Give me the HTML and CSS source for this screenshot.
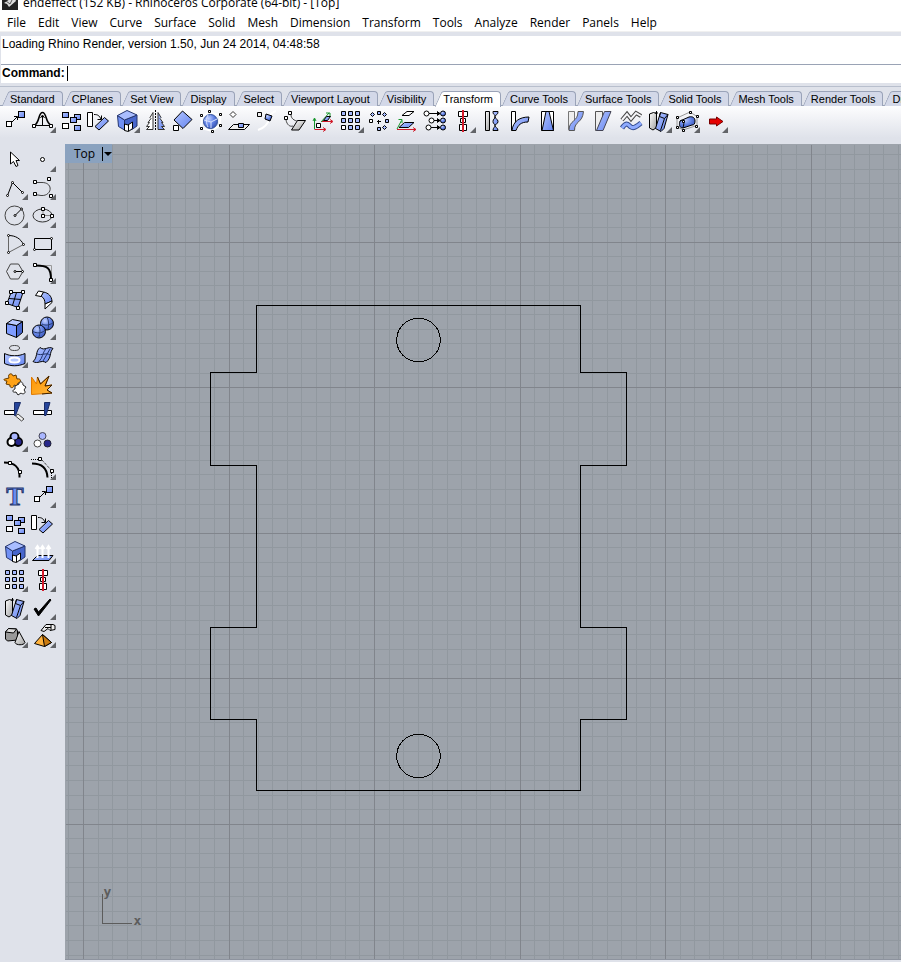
FILE: index.html
```
<!DOCTYPE html>
<html lang="en">
<head>
    <meta charset="UTF-8">
    <meta name="viewport" content="width=device-width, initial-scale=1.0">
    <title>endeffect (152 KB) - Rhinoceros Corporate (64-bit) - [Top]</title>
    <link rel="stylesheet" href="styles.css">
</head>
<body>
    <!-- icon set, every icon on a 28 x 28 grid -->
    <svg class="icon-defs" aria-hidden="true">
        <defs>
            <linearGradient id="blue" x1="0" y1="0" x2="1" y2="1"><stop offset="0" stop-color="#b4c6ff"/><stop offset="1" stop-color="#6484f0"/></linearGradient>
            <radialGradient id="ball" cx=".35" cy=".3" r=".8"><stop offset="0" stop-color="#c4d2ff"/><stop offset=".5" stop-color="#6484e6"/><stop offset="1" stop-color="#304cae"/></radialGradient>
            <linearGradient id="gray" x1="0" y1="0" x2="1" y2="1"><stop offset="0" stop-color="#ffffff"/><stop offset="1" stop-color="#a0a0a0"/></linearGradient>
            <linearGradient id="gold" x1="0" y1="0" x2="1" y2="1"><stop offset="0" stop-color="#ff9500"/><stop offset="1" stop-color="#ffb63c"/></linearGradient>
        </defs>
        <symbol id="fly" viewBox="0 0 28 28"><path d="M27 21v6h-6z" fill="#626468" stroke="none"/></symbol>
        <symbol id="move" viewBox="0 0 28 28"><path d="M11 16l5-5M13 10.5h3.5v3.500" fill="none"/><rect x="5.5" y="15.5" width="5" height="5" fill="#fff"/><rect x="17.5" y="5.5" width="6" height="6" fill="url(#blue)"/></symbol>
        <symbol id="bell" viewBox="0 0 28 28"><path d="M5 19.5C11 17 9 6.5 13.5 6.5S16 17 22.5 19.5" fill="none" stroke-width="1.6"/><path d="M5 19.5h17M13.5 19v-9M11.5 12l2-3 2 3" fill="none"/><path d="M3.5 18.5h3v3h-3zM20.5 18.5h3v3h-3z" fill="#fff"/></symbol>
        <symbol id="copy" viewBox="0 0 28 28"><rect x="5.5" y="6.5" width="6" height="5" fill="url(#blue)"/><rect x="17.5" y="8.5" width="6" height="5" fill="url(#blue)"/><rect x="13.5" y="11.5" width="6" height="5" fill="url(#blue)"/><rect x="17.5" y="19.5" width="6" height="5" fill="url(#blue)"/><rect x="5.5" y="17.5" width="6" height="5" fill="#fff"/></symbol>
        <symbol id="rotate" viewBox="0 0 28 28"><path d="M2.5 6.5h5v14h-5z" fill="#fff"/><path d="M9 8.5c4 0 5 1 7 4.5M16.5 9.5v4h-4" fill="none"/><path d="M19.5 11.5l4 3.5-9.5 9-4-3.5z" fill="url(#blue)"/></symbol>
        <symbol id="cage" viewBox="0 0 28 28"><g stroke="#24356e"><path d="M4.500 9.500l7 4.500v10l-6-3.500z" fill="#7090f4"/><path d="M11.500 14L24 9v11l-5 3.500-7.500.5z" fill="#4766cc"/><path d="M4.500 9.500L14 4.500l10 4.500-12.500 5z" fill="#a9bdff"/></g><path d="M11.500 24.500v-6.500l3.500 1 4.500-3v6.500l-4 3z" fill="#fff"/><path d="M15.500 19v6"/></symbol>
        <symbol id="mirror" viewBox="0 0 28 28"><path d="M12 6.5v17H5.5l3-3h-3l3-4H7l3-4-1-1 3-5z" fill="#fff" stroke="#333"/><path d="M17 6.5v17h6.5l-3-3h3l-3-4H22l-3-4 1-1-3-5z" fill="url(#blue)" stroke="#333"/><path d="M14.5 4v21" stroke-dasharray="2 1"/></symbol>
        <symbol id="scale" viewBox="0 0 28 28"><path d="M13.5 5l9.5 8.5-9 9L5 14z" fill="url(#blue)"/><path d="M4.5 19.5h5v5h-5z" fill="#fff"/></symbol>
        <symbol id="globe" viewBox="0 0 28 28"><path d="M5 10l7-4 11 3v10l-8 6-11-3z" fill="none" stroke="#fff" stroke-width="2"/><circle cx="13.5" cy="15.5" r="7" fill="url(#ball)" stroke="#30509c"/><path d="M7 14l7 2 6-3M14 16v6M11 9c-2 4-2 8 0 12" fill="none" stroke="#d8e2ff"/><path d="M3.5 8.5h2v2h-2zM11.5 4.5h2v2h-2zM22.5 7.5h2v2h-2zM3.5 21.5h2v2h-2zM22.5 18.5h2v2h-2zM14.5 24.5h2v2h-2z" fill="#fff"/></symbol>
        <symbol id="plane" viewBox="0 0 28 28"><path d="M8 5.5l3 3-3 3-3-3z" fill="#fff" stroke="#333"/><path d="M3.5 23.5l5-5h16l-5 5z" fill="#eee"/><path d="M13.5 17.5h5v4h-5z" fill="url(#blue)"/></symbol>
        <symbol id="along" viewBox="0 0 28 28"><path d="M23 5c-4 1-6 3-7 8s-5 9-11 11" fill="none" stroke="#fff" stroke-width="2"/><path d="M4.5 6.5h4v4h-4z" fill="#eee"/><path d="M13 8l6 2-2 5-5-2z" fill="url(#ball)"/></symbol>
        <symbol id="orient" viewBox="0 0 28 28"><path d="M5 14c1 5 4 7 7 6M10 9c0 3 3 6 7 6" fill="none" stroke="#444"/><path d="M10.5 24l6-9.5h8l-6.5 9.5z" fill="url(#gray)"/><path d="M7.5 5.5h3v3h-3zM3.5 10.5h3v3h-3z" fill="#fff"/></symbol>
        <symbol id="remap" viewBox="0 0 28 28"><path d="M5.5 23V13M4 15l1.5-3L7 15M12 16l8-9M17 7h4v4" fill="none" stroke="#16962a"/><path d="M5.5 23.5H16M14 21.5l3 2-3 2M13 15.5h10M21 13.5l3 2-3 2" fill="none" stroke="#d01828"/><path d="M7.5 17.5h4v4h-4z" fill="#fff"/><path d="M14.5 14.5l3-4h4l-3 4z" fill="url(#blue)"/></symbol>
        <symbol id="array" viewBox="0 0 28 28"><path d="M4.5 5.5h4v4h-4zM11.5 5.5h4v4h-4zM18.5 5.5h4v4h-4zM4.5 12.5h4v4h-4zM11.5 12.5h4v4h-4zM18.5 12.5h4v4h-4zM11.5 19.5h4v4h-4zM18.5 19.5h4v4h-4z" fill="#a5b9ff"/><path d="M4.5 19.5h4v4h-4z" fill="#fff"/></symbol>
        <symbol id="polar" viewBox="0 0 28 28"><path d="M12.5 5.5h3v3h-3zM20.5 13.5h3v3h-3zM12.5 21.5h3v3h-3zM19.5 6.5l2 2-2 2-2-2zM19.5 19.5l2 2-2 2-2-2zM7.5 6.5l2 2-2 2-2-2z" fill="#a5b9ff"/><path d="M4.5 13.5h3v3h-3z" fill="#fff"/><path d="M12 15.5h4M13.5 14v4"/></symbol>
        <symbol id="cplane" viewBox="0 0 28 28"><path d="M9 9.5l5-4h7l-5 4z" fill="#fff"/><path d="M6 21.5l5.5-5H21l-5.5 5z" fill="url(#blue)"/><path d="M4 23l4.5-8.5M5.5 13.5h3.5v3.500" fill="none" stroke="#16962a"/><path d="M4 23.5h19M20 21.5l3 2-3 2" fill="none" stroke="#d01828"/></symbol>
        <symbol id="points" viewBox="0 0 28 28"><path d="M8 7.5h11M13 14.5h6M10 21.5h9M16 5.5l3 2-3 2M16 12.5l3 2-3 2M16 19.5l3 2-3 2"/><g fill="#fff"><circle cx="5.5" cy="7.5" r="2.5"/><circle cx="10.5" cy="14.5" r="2.5"/><circle cx="7.5" cy="21.5" r="2.5"/></g><g fill="url(#ball)"><circle cx="22" cy="7.5" r="2.5"/><circle cx="22" cy="14.5" r="2.5"/><circle cx="22" cy="21.5" r="2.5"/></g></symbol>
        <symbol id="align" viewBox="0 0 28 28"><path d="M9.5 5.5h9v5h-9zM11.5 12.5h5v4h-5zM10.5 18.5h7v6h-7z" fill="#fff"/><path d="M14 4v22" stroke="#d41c2c" stroke-width="2"/></symbol>
        <symbol id="twist" viewBox="0 0 28 28"><path d="M8.5 5.5h4v19h-4z" fill="url(#gray)"/><path d="M16 5.5h5c0 4-3 3-3 5 0 3 3 2 3 5s-3 2-3 4 3 2 3 5h-5c0-3 2-3 2-5s-2-1-2-4 2-2 2-5-2-1-2-5z" fill="url(#blue)"/></symbol>
        <symbol id="bend" viewBox="0 0 28 28"><path d="M6.5 5.5h4v19h-4z" fill="#fff"/><path d="M7 24.5C8 15 15 11 24 11l-1 5c-7 0-10 3-12 8.5z" fill="url(#blue)"/></symbol>
        <symbol id="taper" viewBox="0 0 28 28"><path d="M8.5 5.5h12v19h-12z" fill="#fff"/><path d="M9 24.5l4-19h3l4.5 19z" fill="url(#blue)"/></symbol>
        <symbol id="flow" viewBox="0 0 28 28"><path d="M7.5 5.5h6v18h-6z" fill="#eee" stroke="#777"/><path d="M8 24.5c0-11 9-8 9-19h5.5c-1 12-9 9-9 19z" fill="url(#blue)" stroke="#555"/></symbol>
        <symbol id="shear" viewBox="0 0 28 28"><path d="M6.5 5.5h7v19h-7z" fill="#eee" stroke="#555"/><path d="M7.5 24.5l8-19H22l-8 19z" fill="url(#blue)" stroke="#445"/></symbol>
        <symbol id="smooth" viewBox="0 0 28 28"><path d="M5 14l5-6 4 5 5-6 5 3" fill="none" stroke="#444" stroke-width="4"/><path d="M5 14l5-6 4 5 5-6 5 3" fill="none" stroke="#f5f5f8" stroke-width="2"/><path d="M5 22c5-7 6-3 9-1s6-1 10-4" fill="none" stroke="#334b8e" stroke-width="5"/><path d="M5 22c5-7 6-3 9-1s6-1 10-4" fill="none" stroke="#8eabff" stroke-width="3"/></symbol>
        <symbol id="tubes" viewBox="0 0 28 28"><path d="M4.5 8l4-1.5 3 1v14L8 24l-3.500-2z" fill="url(#gray)"/><path d="M11.5 8V5M10 7h3"/><path d="M15.5 6.5l7.5 2-4 14-3 3-5.500-3z" fill="url(#blue)"/><path d="M15.5 6.5l-1 4 5 2 3.5-4M19.5 12.5l-4 12" fill="none"/></symbol>
        <symbol id="boxedit" viewBox="0 0 28 28"><path d="M4 12l13-6 7 4.5v9L10 24l-6-3.500z" fill="none" stroke="#999"/><path d="M7 15l9-4c4-1 6 1 6 4s-1 4-3 4l-9 3c-4 0-4-4-3-7z" fill="url(#ball)"/><path d="M7 15c3-2 5 0 3 7" fill="none"/><path d="M3.5 10.5h2v2h-2zM16.5 5.5h2v2h-2zM23.5 9.5h2v2h-2zM3.5 20.5h2v2h-2zM9.5 23.5h2v2h-2zM22.5 19.5h2v2h-2zM9.5 14.5h2v2h-2z" fill="#fff"/></symbol>
        <symbol id="next" viewBox="0 0 28 28"><path d="M8.500 13h7v-2l6.500 4.500-6.500 4.500v-2h-7z" fill="#e60000" stroke="#700"/></symbol>

        <symbol id="cursor" viewBox="0 0 28 28"><path d="M9.5 7v12l3-2.500 2.500 5 2-1-2-5h3.500z" fill="#fff"/></symbol>
        <symbol id="point" viewBox="0 0 28 28"><circle cx="13.5" cy="14.5" r="2" fill="#fff"/></symbol>
        <symbol id="polyline" viewBox="0 0 28 28"><path d="M6.5 22.5l5-13 10 10" fill="none"/><g fill="#fff"><circle cx="6.5" cy="22.5" r="1"/><circle cx="11.5" cy="9.5" r="1"/><circle cx="21.5" cy="19.5" r="1"/></g></symbol>
        <symbol id="curve" viewBox="0 0 28 28"><path d="M6 9.5h7c12 0 10 14-1 13l-6-1" fill="none" stroke="#444"/><path d="M4.5 7.5h3v3h-3zM18.5 4.5h3v3h-3zM4.5 19.5h3v3h-3zM20.5 21.5h3v3h-3z" fill="#fff"/></symbol>
        <symbol id="circle" viewBox="0 0 28 28"><circle cx="13.5" cy="14.5" r="9.5" fill="none" stroke="#444"/><path d="M14 14.5l6-6"/><circle cx="14" cy="14.5" r="1" fill="#fff"/><circle cx="20.5" cy="8" r="1" fill="#fff"/></symbol>
        <symbol id="ellipse" viewBox="0 0 28 28"><ellipse cx="13.5" cy="14.5" rx="9.5" ry="6.5" fill="none" stroke="#333"/><path d="M14 8v6.5h8" fill="none" stroke="#888"/><path d="M12.5 6.5h3v3h-3zM12.5 13.5h3v3h-3zM21.5 13.5h3v3h-3z" fill="#fff"/></symbol>
        <symbol id="arc" viewBox="0 0 28 28"><path d="M22.5 15.5L7.5 23.5V7" fill="none" stroke="#666"/><path d="M7.5 6.5c7 0 12 3 15 9" fill="none"/><g fill="#fff"><circle cx="7.5" cy="6.5" r="1"/><circle cx="22.5" cy="15.5" r="1"/><circle cx="7.5" cy="23.5" r="1"/></g></symbol>
        <symbol id="rect" viewBox="0 0 28 28"><path d="M5.5 9.5h17v11h-17z" fill="none"/><circle cx="22.5" cy="9.5" r="1" fill="#fff"/><circle cx="5.5" cy="20.5" r="1" fill="#fff"/></symbol>
        <symbol id="polygon" viewBox="0 0 28 28"><path d="M5.5 14.5l4-7.500h8l4.500 7.500-4.500 7.500h-8z" fill="none" stroke="#444"/><path d="M14 14.5h8"/><circle cx="14" cy="14.5" r="1" fill="#fff"/><circle cx="21.5" cy="14.5" r="1" fill="#fff"/></symbol>
        <symbol id="fillet" viewBox="0 0 28 28"><path d="M7 8.5h15.5V22" fill="none" stroke="#999"/><path d="M7 8.5c11 0 15 2 15 14" fill="none" stroke-width="2"/><path d="M4.5 6.5h3v3h-3zM20.5 21.5h3v3h-3z" fill="#fff"/></symbol>
        <symbol id="surface" viewBox="0 0 28 28"><path d="M10 7.5h12l-5 15-11-4z" fill="url(#blue)"/><path d="M15.5 7.5l-4 13M8 13.5l12 1"/><path d="M8.5 5.5h3v3h-3zM20.5 5.5h3v3h-3zM4.5 16.5h3v3h-3zM15.5 21.5h3v3h-3z" fill="#fff"/></symbol>
        <symbol id="sweep" viewBox="0 0 28 28"><path d="M14.500 7c5 1 8 4 8.500 9l-7 3c0-4-1-6-4-8z" fill="url(#blue)"/><path d="M6.500 10.500l3-4.500 5 1-2.500 4.500z" fill="#fff"/><path d="M23 16v1.500L16 24v-5z" fill="#fff"/></symbol>
        <symbol id="box" viewBox="0 0 28 28"><path d="M5.5 10.5l10 2v12l-10-4z" fill="#7e9cff"/><path d="M15.5 12.5l6-4v11l-6 5z" fill="#4766cc"/><path d="M5.5 10.5l6-4 10 2-6 4z" fill="#b9caff"/></symbol>
        <symbol id="spheres" viewBox="0 0 28 28"><circle cx="18" cy="10.5" r="6.5" fill="url(#ball)"/><circle cx="10" cy="18.5" r="6.5" fill="url(#ball)"/><path d="M4 18.5c4 2 8 2 12-1M9.5 12c2 4 2 8 0 13M13 11c4 2 7 1 11-1M18 4c2 4 2 8 1 12" fill="none" stroke="#24386c"/></symbol>
        <symbol id="fromsurf" viewBox="0 0 28 28"><ellipse cx="13.5" cy="7" rx="5" ry="2.5" fill="none" stroke="#444"/><path d="M3.5 12.5c6 3 14 3 20.5 0v10c-7 3-14 3-20.500 0z" fill="url(#blue)"/><ellipse cx="13.5" cy="19" rx="5" ry="2.5" fill="#b9caff" stroke="#fff" stroke-width="2"/></symbol>
        <symbol id="patch" viewBox="0 0 28 28"><path d="M11 6.5c5 4 8-2 13 1-4 4-1 9-7 14-5-3-8 2-13-1 5-4 2-10 7-14z" fill="url(#blue)"/><path d="M17 7.5c-4 5-3 9-7 13M8 13c5 2 9-2 13 1M21 8l-7 12" fill="none" stroke="#223468"/></symbol>
        <symbol id="puzzle" viewBox="0 0 28 28"><path d="M4 10l4-1c-2-4 3-6 4-2l3-1 1 4c5-1 4 4 1 4l-1 3-3-1c0 4-5 3-4 0l-4-1 1-3c-3 0-4-2-2-2z" fill="#ffa216" stroke="#633a00"/><path d="M14 17l4-2c0-3 4-3 4 1l3 2-2 3c3 3-1 5-3 3l-3 2-2-3c-4 1-4-2-1-3z" fill="#fff" stroke="#222"/></symbol>
        <symbol id="explode" viewBox="0 0 28 28"><path d="M2.500 8l5 7 1-7 3 7L20 7l-4 10 7-1-5 5 5 3-20.500 1.500z" fill="url(#gold)" stroke="#e07a00"/><path d="M8.500 8l3 7L20 7l-4 10 7-1-5 5 5 3-10 1" fill="none" stroke="#3a2000"/></symbol>
        <symbol id="trim" viewBox="0 0 28 28"><path d="M3.5 13.5h10v4h-10z" fill="#fff"/><path d="M17 17l6 5-2.500 2-6-5z" fill="#eee" stroke="#444"/><path d="M13.5 5.5h6l-5 13h-1z" fill="#26459b" stroke="#1a2c66"/></symbol>
        <symbol id="split" viewBox="0 0 28 28"><path d="M4.5 13.5h18v4h-18z" fill="#fff"/><path d="M15.5 5.5h5.5l-4 13h-1.500z" fill="#26459b" stroke="#1a2c66"/></symbol>
        <symbol id="join" viewBox="0 0 28 28"><g stroke-width="4" fill="#000"><circle cx="13.5" cy="12" r="3"/><circle cx="10.5" cy="17" r="3"/><circle cx="17" cy="17" r="3"/></g><g stroke="none"><circle cx="13.5" cy="11.5" r="3" fill="#a9b6ff"/><circle cx="10.5" cy="17" r="3" fill="#fff"/><circle cx="17.5" cy="17" r="3" fill="#28288c"/></g></symbol>
        <symbol id="unjoin" viewBox="0 0 28 28"><circle cx="13.5" cy="11" r="3.5" fill="#a9b6ff" stroke="#445"/><circle cx="8.5" cy="18.5" r="3.5" fill="#fff" stroke="#444"/><circle cx="18.5" cy="18.5" r="3.5" fill="#28288c" stroke="#223"/></symbol>
        <symbol id="pointson" viewBox="0 0 28 28"><path d="M3 9.5c10 0 16 4 15.5 15" fill="none" stroke-width="2"/><path d="M7.5 8.5h3v3h-3zM17.5 17.5h3v3h-3z" fill="#fff"/></symbol>
        <symbol id="editpts" viewBox="0 0 28 28"><path d="M3 10.5c9 0 15 4 15.5 14" fill="none" stroke-width="2"/><path d="M2 6.500h8M13 7l9 10M22.500 20v6" fill="none" stroke-dasharray="1 1"/><path d="M9.5 4.5h3v3h-3zM21.5 16.5h3v3h-3z" fill="#fff"/></symbol>
        <symbol id="text" viewBox="0 0 28 28"><text class="icon-letter" x="14" y="24">T</text></symbol>
        <symbol id="extrude" viewBox="0 0 28 28"><path d="M3.5 23.5l5-5H24l-4 5z" fill="url(#blue)"/><path d="M8.5 21V9M13.5 21V9M19.5 21V9M6.5 12l2-3 2 3M11.5 12l2-3 2 3M17.5 12l2-3 2 3" fill="none" stroke="#fff" stroke-width="2"/></symbol>
        <symbol id="check" viewBox="0 0 28 28"><path d="M5 16l2-1 2.5 4L21 6l1 1L9.5 23z" fill="#000"/></symbol>
        <symbol id="solids" viewBox="0 0 28 28"><path d="M4.5 11l3-3.500 8 .5 1 2v9l-10 1-2-2z" fill="#999"/><path d="M4.5 11l3-3.500 8 .5-3 4z" fill="#ddd"/><path d="M18 10.5l6 11c-1 3-9 3-10 0z" fill="url(#gray)"/></symbol>
        <symbol id="render" viewBox="0 0 28 28"><path d="M13.5 13.5l9 8-7 4-10-3z" fill="#ffb23c"/><path d="M13.5 13.5l2 12 7-4z" fill="#c97a10"/><path d="M12 9.5l5-6h7l2 1v4l-5 1-2-2-4 3z" fill="#eee"/><path d="M16 6.5h6M22 4v5"/></symbol>
    </svg>

    <header class="title-bar">
        <svg class="app-icon" width="16" height="16" viewBox="0 0 16 16" aria-hidden="true"><path d="M0 0h16v16H0z" fill="#222"/><path d="M2 9l3 1 2 3 7-6-2-5-4 3z" fill="#ddd"/><path d="M4 7l4 3 2-4" fill="none" stroke="#555"/></svg>
        <span>endeffect (152 KB) - Rhinoceros Corporate (64-bit) - [Top]</span>
    </header>

    <nav class="menu-bar">
        <button>File</button>
        <button>Edit</button>
        <button>View</button>
        <button>Curve</button>
        <button>Surface</button>
        <button>Solid</button>
        <button>Mesh</button>
        <button>Dimension</button>
        <button>Transform</button>
        <button>Tools</button>
        <button>Analyze</button>
        <button>Render</button>
        <button>Panels</button>
        <button>Help</button>
    </nav>

    <section class="command">
        <p class="history">Loading Rhino Render, version 1.50, Jun 24 2014, 04:48:58</p>
        <div class="prompt">
            <label for="cmd">Command:</label>
            <span class="caret"></span>
            <input id="cmd" type="text" autocomplete="off">
        </div>
    </section>

    <div class="tabs">
        <button class="tab">Standard</button>
        <button class="tab">CPlanes</button>
        <button class="tab">Set View</button>
        <button class="tab">Display</button>
        <button class="tab">Select</button>
        <button class="tab">Viewport Layout</button>
        <button class="tab">Visibility</button>
        <button class="tab active">Transform</button>
        <button class="tab">Curve Tools</button>
        <button class="tab">Surface Tools</button>
        <button class="tab">Solid Tools</button>
        <button class="tab">Mesh Tools</button>
        <button class="tab">Render Tools</button>
        <button class="tab">Drafting</button>
    </div>

    <div class="toolbar">
        <button class="tool" aria-label="Move"><svg><use href="#move"/></svg></button>
        <button class="tool" aria-label="Soft move"><svg><use href="#bell"/><use href="#fly"/></svg></button>
        <button class="tool" aria-label="Copy"><svg><use href="#copy"/></svg></button>
        <button class="tool" aria-label="Rotate"><svg><use href="#rotate"/></svg></button>
        <button class="tool" aria-label="Scale"><svg><use href="#cage"/><use href="#fly"/></svg></button>
        <button class="tool" aria-label="Mirror"><svg><use href="#mirror"/></svg></button>
        <button class="tool" aria-label="Orient"><svg><use href="#scale"/></svg></button>
        <button class="tool" aria-label="Cage edit"><svg><use href="#globe"/></svg></button>
        <button class="tool" aria-label="Orient on surface"><svg><use href="#plane"/></svg></button>
        <button class="tool" aria-label="Orient on curve"><svg><use href="#along"/></svg></button>
        <button class="tool" aria-label="Orient curve to edge"><svg><use href="#orient"/></svg></button>
        <button class="tool" aria-label="Remap to CPlane"><svg><use href="#remap"/></svg></button>
        <button class="tool" aria-label="Array"><svg><use href="#array"/><use href="#fly"/></svg></button>
        <button class="tool" aria-label="Polar array"><svg><use href="#polar"/></svg></button>
        <button class="tool" aria-label="Project to CPlane"><svg><use href="#cplane"/></svg></button>
        <button class="tool" aria-label="Set points"><svg><use href="#points"/></svg></button>
        <button class="tool" aria-label="Align"><svg><use href="#align"/><use href="#fly"/></svg></button>
        <button class="tool" aria-label="Twist"><svg><use href="#twist"/></svg></button>
        <button class="tool" aria-label="Bend"><svg><use href="#bend"/></svg></button>
        <button class="tool" aria-label="Taper"><svg><use href="#taper"/></svg></button>
        <button class="tool" aria-label="Flow"><svg><use href="#flow"/></svg></button>
        <button class="tool" aria-label="Shear"><svg><use href="#shear"/></svg></button>
        <button class="tool" aria-label="Smooth"><svg><use href="#smooth"/></svg></button>
        <button class="tool" aria-label="Deformation tools"><svg><use href="#tubes"/><use href="#fly"/></svg></button>
        <button class="tool" aria-label="Cage editing"><svg><use href="#boxedit"/><use href="#fly"/></svg></button>
        <button class="tool" aria-label="Box edit"><svg><use href="#next"/><use href="#fly"/></svg></button>
    </div>

    <main class="workspace">
        <aside class="sidebar">
            <button class="tool" aria-label="Cancel"><svg><use href="#cursor"/></svg></button>
            <button class="tool" aria-label="Point"><svg><use href="#point"/><use href="#fly"/></svg></button>
            <button class="tool" aria-label="Polyline"><svg><use href="#polyline"/><use href="#fly"/></svg></button>
            <button class="tool" aria-label="Curve"><svg><use href="#curve"/><use href="#fly"/></svg></button>
            <button class="tool" aria-label="Circle"><svg><use href="#circle"/><use href="#fly"/></svg></button>
            <button class="tool" aria-label="Ellipse"><svg><use href="#ellipse"/><use href="#fly"/></svg></button>
            <button class="tool" aria-label="Arc"><svg><use href="#arc"/><use href="#fly"/></svg></button>
            <button class="tool" aria-label="Rectangle"><svg><use href="#rect"/><use href="#fly"/></svg></button>
            <button class="tool" aria-label="Polygon"><svg><use href="#polygon"/><use href="#fly"/></svg></button>
            <button class="tool" aria-label="Fillet curves"><svg><use href="#fillet"/><use href="#fly"/></svg></button>
            <button class="tool" aria-label="Surface from points"><svg><use href="#surface"/><use href="#fly"/></svg></button>
            <button class="tool" aria-label="Blend surface"><svg><use href="#sweep"/><use href="#fly"/></svg></button>
            <button class="tool" aria-label="Box"><svg><use href="#box"/><use href="#fly"/></svg></button>
            <button class="tool" aria-label="Boolean union"><svg><use href="#spheres"/><use href="#fly"/></svg></button>
            <button class="tool" aria-label="Project curves"><svg><use href="#fromsurf"/><use href="#fly"/></svg></button>
            <button class="tool" aria-label="Mesh"><svg><use href="#patch"/><use href="#fly"/></svg></button>
            <button class="tool" aria-label="Join"><svg><use href="#puzzle"/></svg></button>
            <button class="tool" aria-label="Explode"><svg><use href="#explode"/></svg></button>
            <button class="tool" aria-label="Trim"><svg><use href="#trim"/></svg></button>
            <button class="tool" aria-label="Split"><svg><use href="#split"/></svg></button>
            <button class="tool" aria-label="Group"><svg><use href="#join"/><use href="#fly"/></svg></button>
            <button class="tool" aria-label="Ungroup"><svg><use href="#unjoin"/></svg></button>
            <button class="tool" aria-label="Edit points on"><svg><use href="#pointson"/></svg></button>
            <button class="tool" aria-label="Control points on"><svg><use href="#editpts"/><use href="#fly"/></svg></button>
            <button class="tool" aria-label="Text"><svg><use href="#text"/></svg></button>
            <button class="tool" aria-label="Move objects"><svg><use href="#move"/><use href="#fly"/></svg></button>
            <button class="tool" aria-label="Copy objects"><svg><use href="#copy"/></svg></button>
            <button class="tool" aria-label="Rotate objects"><svg><use href="#rotate"/></svg></button>
            <button class="tool" aria-label="Scale objects"><svg><use href="#cage"/><use href="#fly"/></svg></button>
            <button class="tool" aria-label="Analyze direction"><svg><use href="#extrude"/><use href="#fly"/></svg></button>
            <button class="tool" aria-label="Array objects"><svg><use href="#array"/><use href="#fly"/></svg></button>
            <button class="tool" aria-label="Align objects"><svg><use href="#align"/><use href="#fly"/></svg></button>
            <button class="tool" aria-label="Deform"><svg><use href="#tubes"/><use href="#fly"/></svg></button>
            <button class="tool" aria-label="Check objects"><svg><use href="#check"/><use href="#fly"/></svg></button>
            <button class="tool" aria-label="Blocks"><svg><use href="#solids"/><use href="#fly"/></svg></button>
            <button class="tool" aria-label="History"><svg><use href="#render"/><use href="#fly"/></svg></button>
        </aside>

        <section class="viewport">
            <svg class="scene" aria-label="Top view of endeffect">
                <g transform="translate(.5 .5)">
                    <path id="minor" class="grid-minor"/>
                    <path id="major" class="grid-major"/>
                    <g class="part">
                        <polygon points="191,161 515,161 515,228 561,228 561,321 515,321 515,483 561,483 561,575 515,575 515,646 191,646 191,575 145,575 145,483 191,483 191,321 145,321 145,228 191,228"/>
                        <circle cx="353" cy="195.5" r="21.8"/>
                        <circle cx="353" cy="611.5" r="21.8"/>
                    </g>
                    <path class="axis" d="M37 749v30h29"/>
                    <text class="axis-name" x="38" y="751">y</text>
                    <text class="axis-name" x="68" y="780">x</text>
                </g>
            </svg>
            <button class="view-name">Top<span class="arrow"></span></button>
        </section>
    </main>

    <script>
        // construction plane grid, a heavy line every 10 cells
        const cell = 14.55;
        const originX = 18;
        const originY = 97.6;

        function drawGrid() {
            const box = document.querySelector('.scene').getBoundingClientRect();
            const lines = { minor: '', major: '' };
            for (let i = -10; originX + i * cell < box.width; i++) {
                lines[i % 10 ? 'minor' : 'major'] += `M${Math.round(originX + i * cell)} 0V${box.height}`;
            }
            for (let i = -10; originY + i * cell < box.height; i++) {
                lines[i % 10 ? 'minor' : 'major'] += `M0 ${Math.round(originY + i * cell)}H${box.width}`;
            }
            document.getElementById('minor').setAttribute('d', lines.minor);
            document.getElementById('major').setAttribute('d', lines.major);
        }

        drawGrid();
        window.addEventListener('resize', drawGrid);
    </script>
</body>
</html>
```
FILE: styles.css
```
* {
    margin: 0;
    padding: 0;
    box-sizing: border-box;
}
body {
    display: flex;
    flex-direction: column;
    min-height: 100vh;
    overflow: hidden;
    background: #dfe2ea;
    color: #000;
    font-family: "Liberation Sans", Arial, sans-serif;
    font-size: 12px;
}
button {
    border: none;
    background: none;
    color: inherit;
    font: inherit;
    white-space: nowrap;
}
.icon-defs {
    position: absolute;
    width: 0;
    height: 0;
}

/* title and menu */
.title-bar {
    display: flex;
    align-items: flex-end;
    gap: 5px;
    height: 13px;
    padding: 0 2px 3px;
    overflow: hidden;
    background: #fff;
    font-family: "Open Sans", "Noto Sans", sans-serif;
    line-height: 14px;
    white-space: nowrap;
}
.app-icon {
    flex: none;
}
.menu-bar {
    display: flex;
    height: 19px;
    padding-left: 1px;
    background: #fff;
    border-bottom: 1px solid #f0f0f0;
    font-family: "Open Sans", "Noto Sans", sans-serif;
}
.menu-bar button {
    padding: 0 6px;
    line-height: 20px;
}

/* command area */
.command {
    margin: 4px 0 3px 1px;
    background: #fff;
}
.history {
    height: 29px;
    padding-left: 1px;
    border-bottom: 1px solid #9aa3b5;
    line-height: 16px;
}
.prompt {
    display: flex;
    align-items: center;
    height: 18px;
    padding: 0 0 2px 1px;
}
.prompt label {
    font-weight: bold;
}
.caret {
    width: 1px;
    height: 15px;
    margin-left: 2px;
    background: #000;
}
.prompt input {
    flex: 1;
    border: none;
    outline: none;
    font: inherit;
}

/* toolbar tabs */
.tabs {
    display: flex;
    height: 20px;
    padding: 4px 0 0 1px;
    border-top: 1px solid #b8bfcd;
    border-bottom: 1px solid #9aa3b8;
    font-size: 11px;
}
.tab {
    flex: none;
    position: relative;
    z-index: 0;
    height: 15px;
    padding: 0 8px 0 9px;
    line-height: 16px;
}
.tab::before,
.tab::after {
    content: "";
    position: absolute;
    z-index: -1;
    top: 0;
    bottom: 0;
    background: #d3d8e8;
    border: 1px solid #9aa3b8;
    border-bottom: none;
}
.tab::before {
    left: 4px;
    width: 12px;
    border-right: none;
    border-radius: 3px 0 0 0;
    transform: skewX(-24deg);
}
.tab::after {
    left: 12px;
    right: 0;
    border-left: none;
    border-radius: 0 4px 0 0;
}
.tab.active {
    height: 16px;
}
.tab.active::before,
.tab.active::after {
    background: #fff;
}

/* tool icons */
.toolbar {
    display: flex;
    height: 32px;
    padding-left: 1px;
    background: linear-gradient(#fdfdfe, #dfe2ea);
}
.tool {
    flex: none;
    width: 28px;
    height: 28px;
}
.tool svg {
    display: block;
    width: 28px;
    height: 28px;
    stroke: #000;
}
.icon-letter {
    font: bold 26px "Liberation Serif", serif;
    text-anchor: middle;
    fill: #6b8cf0;
    stroke: #26386e;
}

.workspace {
    flex: 1;
    display: flex;
    padding: 6px 0 2px;
}
.sidebar {
    flex: none;
    display: grid;
    grid-template-columns: 28px 28px;
    grid-auto-rows: 28px;
    align-content: start;
    width: 65px;
    padding: 1px 0 0 1px;
}

/* viewport */
.viewport {
    flex: 1;
    position: relative;
    background: #9da3ab;
    border-bottom: 1px solid #8d939e;
}
.scene {
    position: absolute;
    width: 100%;
    height: 100%;
    fill: none;
    shape-rendering: crispEdges;
}
.grid-minor {
    stroke: #91989f;
}
.grid-major {
    stroke: #81858c;
}
.part {
    stroke: #000;
}
.axis {
    stroke: #5c5c5c;
}
.axis-name {
    font: bold 13px "DejaVu Sans Mono", monospace;
    fill: #5c5c5c;
}
.view-name {
    position: absolute;
    top: 0;
    left: 0;
    display: flex;
    align-items: center;
    gap: 7px;
    height: 19px;
    padding: 0 0 0 9px;
    background: #8aa2bf;
    font-family: "Open Sans", "Noto Sans", sans-serif;
}
.arrow {
    width: 10px;
    height: 14px;
    border-left: 1px solid #000;
    position: relative;
}
.arrow::after {
    content: "";
    position: absolute;
    top: 5px;
    left: 1px;
    border: 4px solid transparent;
    border-top-color: #000;
}
```
